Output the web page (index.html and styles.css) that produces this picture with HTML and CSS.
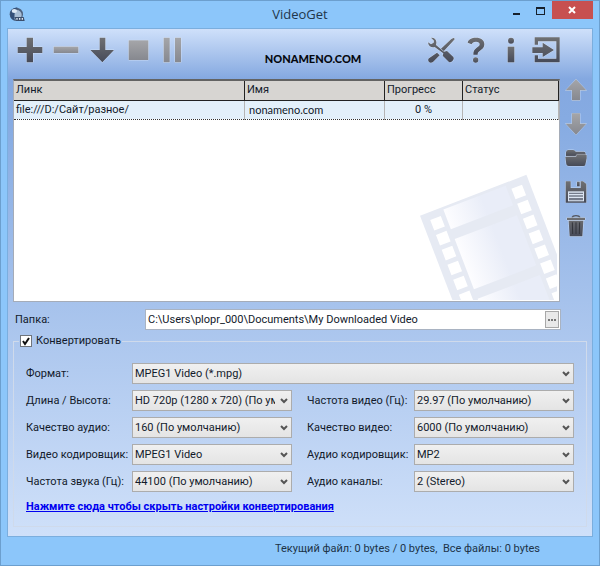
FILE: index.html
```html
<!DOCTYPE html>
<html lang="ru">
<head>
    <meta charset="UTF-8">
    <meta name="viewport" content="width=device-width, initial-scale=1.0">
    <title>VideoGet</title>
    <link rel="stylesheet" href="styles.css">
</head>
<body>
    <svg class="defs" width="0" height="0" aria-hidden="true">
        <defs>
            <linearGradient id="dark" x1="0" y1="0" x2="0" y2="1">
                <stop offset="0" stop-color="#6f7073"/>
                <stop offset="1" stop-color="#464a58"/>
            </linearGradient>
            <linearGradient id="light" x1="0" y1="0" x2="0" y2="1">
                <stop offset="0" stop-color="#a5a6a9"/>
                <stop offset="1" stop-color="#86888f"/>
            </linearGradient>
            <linearGradient id="frame" x1="0" y1="0" x2="1" y2="0">
                <stop offset="0" stop-color="#fdfdff"/>
                <stop offset="0.6" stop-color="#e9edf8"/>
            </linearGradient>
        </defs>
    </svg>

    <header class="titlebar">
        <svg class="logo" width="16" height="16" viewBox="0 0 48 48">
            <circle cx="22" cy="22" r="20" fill="#4c607e"/>
            <circle cx="23" cy="24" r="15" fill="#a9bed6"/>
            <path d="M4 26a20 20 0 0 1 22-24q-12 8-9 38Q6 36 4 26z" fill="#34507a"/>
            <ellipse cx="16" cy="12" rx="8" ry="6" fill="#dfeaf6"/>
            <path d="M16 30h28l3 12H22z" fill="#3c4f6d"/>
            <path d="M22 33h4v5h-4zM30 33h4v5h-4zM38 33h4v5h-4z" fill="#dfe8f2"/>
        </svg>
        <h1>VideoGet</h1>
        <div class="window-buttons">
            <button type="button" aria-label="Свернуть">
                <svg width="9" height="9" viewBox="0 0 9 9"><path d="M1 7h7v2H1z" fill="#16202c"/></svg>
            </button>
            <button type="button" aria-label="Развернуть">
                <svg width="9" height="9" viewBox="0 0 9 9"><path d="M0 1h9v8H0zM1 3v5h7V3z" fill="#16202c" fill-rule="evenodd"/></svg>
            </button>
            <button type="button" class="close" aria-label="Закрыть">
                <svg width="9" height="9" viewBox="0 0 9 9"><path d="M1 1l6 6M7 1L1 7" stroke="#fff" stroke-width="2"/></svg>
            </button>
        </div>
    </header>

    <main class="client">
        <div class="toolbar">
            <button type="button" aria-label="Добавить">
                <svg width="26" height="26" viewBox="0 0 78 78"><path class="dark" d="M29 2h19v28h28v18H48v28H29V48H2V30h27z"/></svg>
            </button>
            <button type="button" aria-label="Удалить">
                <svg width="26" height="26" viewBox="0 0 78 78"><path class="light" d="M2 29h74v19H2z"/></svg>
            </button>
            <button type="button" aria-label="Загрузить">
                <svg width="26" height="26" viewBox="0 0 78 78"><path class="dark" d="M32 2h17v37h26L40 76 4 39h28z"/></svg>
            </button>
            <button type="button" aria-label="Стоп">
                <svg width="26" height="26" viewBox="0 0 78 78"><path class="light" d="M11 10h59v59H11z"/></svg>
            </button>
            <button type="button" aria-label="Пауза">
                <svg width="26" height="26" viewBox="0 0 78 78"><path class="light" d="M8 2h18v74H8zM42 2h18v74H42z"/></svg>
            </button>
            <span class="brand">NONAMENO.COM</span>
            <button type="button" class="wide" aria-label="Настройки">
                <svg width="28" height="26" viewBox="0 0 84 78">
                    <path class="dark" d="M81 2l2 5-33 36-8-8L73 6zM30 47l8 8-20 20q-7 4-12 0-5-6 0-11z"/>
                    <path class="dark" d="M12 2c10-1 17 6 16 16l-1 6 24 20 9-2 19 18c5 7-6 20-14 14L47 56l2-7-26-19c-9 3-19-2-20-14l9 6 8-5 1-6z"/>
                </svg>
            </button>
            <button type="button" class="wide" aria-label="Справка">
                <svg width="18" height="26" viewBox="0 0 54 78">
                    <path class="dark" d="M2 17C4 7 14 2 27 2c15 0 25 7 25 20 0 9-5 14-13 19-6 4-7 6-7 12H19c0-10 2-15 10-21 6-4 9-6 9-10 0-5-4-8-11-8-8 0-11 3-13 8z"/>
                    <circle class="dark" cx="26" cy="69" r="8"/>
                </svg>
            </button>
            <button type="button" class="wide" aria-label="О программе">
                <svg width="8" height="26" viewBox="0 0 24 78"><circle class="dark" cx="12" cy="11" r="9"/><path class="dark" d="M2 29h20v47H2z"/></svg>
            </button>
            <button type="button" class="wide" aria-label="Выход">
                <svg width="28" height="26" viewBox="0 0 84 78"><path class="dark" d="M8 1h75v75H8V55h10v10h55V13H18v10H8zM1 31h31V17l34 22-34 21V48H1z"/></svg>
            </button>
        </div>

        <div class="workspace">
            <div class="list">
                <svg class="film" width="137" height="126" viewBox="60 125 411 378" aria-hidden="true">
                    <g transform="translate(60 250) rotate(-21)">
                        <path d="M0 0h342v600H0z" fill="#e6eaf3"/>
                        <path d="M72 8h200v63H72zM72 103h200v161H72zM72 295h200v161H72z" fill="url(#frame)"/>
                        <path d="M41 40V600M302 40V600" transform="translate(0 -17)" stroke="#fff" stroke-width="34" stroke-dasharray="34 14"/>
                    </g>
                </svg>
                <table>
                    <colgroup>
                        <col><col class="col-name"><col class="col-progress"><col class="col-status">
                    </colgroup>
                    <thead>
                        <tr><th>Линк</th><th>Имя</th><th>Прогресс</th><th>Статус</th></tr>
                    </thead>
                    <tbody>
                        <tr><td>file:///D:/Сайт/разное/</td><td class="name">nonameno.com</td><td class="progress">0 %</td><td></td></tr>
                    </tbody>
                </table>
            </div>
            <div class="side">
                <button type="button" aria-label="Вверх">
                    <svg width="22" height="22" viewBox="0 0 66 66"><path class="light" d="M33 1l31 33H45v30H21V34H2z"/></svg>
                </button>
                <button type="button" aria-label="Вниз">
                    <svg width="22" height="22" viewBox="0 0 66 66"><path class="light" d="M21 1h24v31h19L33 65 2 32h19z"/></svg>
                </button>
                <button type="button" aria-label="Открыть папку">
                    <svg width="22" height="22" viewBox="0 0 66 66">
                        <path class="dark" d="M3 27V16q1-7 7-7h14q6 0 8 5h24q6 0 6 7v6z"/>
                        <path class="dark" d="M1 30l32-1 3-5h29v10l-4 19q-1 4-6 4H11q-6 0-7-5z"/>
                        <path d="M3 28h29l3-6h28" fill="none" stroke="#9a9ca3" stroke-width="2"/>
                    </svg>
                </button>
                <button type="button" aria-label="Сохранить">
                    <svg width="22" height="22" viewBox="0 0 66 66">
                        <path class="dark" d="M2 1h15v20h30V1h7l10 8v56H2z"/>
                        <path class="dark" d="M36 2h8v14h-8z"/>
                        <path d="M9 31h48v30H9z" fill="#dbe4f2"/>
                        <path d="M12 35h42v4H12zM12 43h42v4H12zM12 51h42v7H12z" fill="#747b8b"/>
                    </svg>
                </button>
                <button type="button" aria-label="Очистить">
                    <svg width="22" height="22" viewBox="0 0 66 66">
                        <path d="M21 8q2-6 12-6t12 6" fill="none" stroke="#55585f" stroke-width="4"/>
                        <path class="dark" d="M6 8h54v7H6zM11 17h44l-3 47H14z"/>
                        <path d="M22 22l1 35M33 22v35M44 22l-1 35" stroke="#33353c" stroke-width="3"/>
                    </svg>
                </button>
            </div>
        </div>

        <div class="folder">
            <label for="folder">Папка:</label>
            <div class="path">
                <input type="text" id="folder" value="C:\Users\plopr_000\Documents\My Downloaded Video">
                <button type="button" aria-label="Обзор">
                    <svg width="8" height="2" viewBox="0 0 8 2"><path d="M0 0h2v2H0zM3 0h2v2H3zM6 0h2v2H6z" fill="#777"/></svg>
                </button>
            </div>
        </div>

        <fieldset>
            <legend>
                <input type="checkbox" id="convert" checked>
                <label for="convert">Конвертировать</label>
            </legend>
            <div class="options">
                <label for="format">Формат:</label>
                <select id="format" class="full"><option>MPEG1 Video (*.mpg)</option></select>

                <label for="size">Длина / Высота:</label>
                <select id="size"><option>HD 720p (1280 x 720) (По умолчанию)</option></select>
                <label for="fps" class="second">Частота видео (Гц):</label>
                <select id="fps"><option>29.97 (По умолчанию)</option></select>

                <label for="aquality">Качество аудио:</label>
                <select id="aquality"><option>160 (По умолчанию)</option></select>
                <label for="vquality" class="second">Качество видео:</label>
                <select id="vquality"><option>6000 (По умолчанию)</option></select>

                <label for="vcodec">Видео кодировщик:</label>
                <select id="vcodec"><option>MPEG1 Video</option></select>
                <label for="acodec" class="second">Аудио кодировщик:</label>
                <select id="acodec"><option>MP2</option></select>

                <label for="rate">Частота звука (Гц):</label>
                <select id="rate"><option>44100 (По умолчанию)</option></select>
                <label for="channels" class="second">Аудио каналы:</label>
                <select id="channels"><option>2 (Stereo)</option></select>
            </div>
            <a href="#">Нажмите сюда чтобы скрыть настройки конвертирования</a>
        </fieldset>
    </main>

    <footer>Текущий файл: 0 bytes / 0 bytes,&nbsp; Все файлы: 0 bytes</footer>
</body>
</html>
```
FILE: styles.css
```css
* {
    box-sizing: border-box;
}
body {
    margin: 0;
    min-height: 100vh;
    display: flex;
    flex-direction: column;
    padding: 0 6px;
    border: 1px solid #6c9fce;
    background: #8cc6fa;
    color: #121a2b;
    font-family: Roboto, "Noto Sans", sans-serif;
    font-size: 11px;
    line-height: 16px;
}
button {
    display: flex;
    align-items: center;
    justify-content: center;
    padding: 0;
    border: 0;
    background: none;
    font: inherit;
}
svg {
    display: block;
}
.defs {
    position: absolute;
}
.dark, .light {
    stroke: rgba(225, 236, 252, 0.6);
    stroke-width: 3px;
    paint-order: stroke;
}
.dark {
    fill: url(#dark);
}
.light {
    fill: url(#light);
}

/* title bar */
.titlebar {
    display: grid;
    grid-template-columns: 1fr auto 1fr;
    height: 27px;
}
.logo {
    margin: 6px 0 0 2px;
}
h1 {
    margin: 0;
    font-family: "Open Sans", sans-serif;
    font-size: 13px;
    font-weight: normal;
    line-height: 26px;
    color: #22364a;
}
.window-buttons {
    display: flex;
    justify-content: flex-end;
}
.window-buttons button {
    width: 24px;
    height: 18px;
}
.window-buttons .close {
    width: 41px;
    background: #c75050;
}

.client {
    flex: 1;
    display: flex;
    flex-direction: column;
    padding: 0 5px 9px;
    border: 1px solid #7baede;
    background: linear-gradient(#cfe0fa 0, #84a8e0 50px, #86abe2 90px, #cfe0f9 100%);
}

/* toolbar */
.toolbar {
    display: flex;
    gap: 10px;
    height: 50px;
    padding: 8px 27px 0 4px;
}
.toolbar button {
    width: 26px;
    height: 26px;
}
.toolbar .wide {
    width: 28px;
    margin-left: -3px;
}
.brand {
    flex: 1;
    padding: 14px 0 0 9px;
    text-align: center;
    font-family: Lato, "Open Sans", sans-serif;
    font-size: 11px;
    font-weight: 900;
    color: #05080f;
}

/* downloads */
.workspace {
    flex: 1;
    display: flex;
}
.list {
    position: relative;
    flex: 1;
    min-height: 220px;
    border: 1px solid #a5acb8;
    border-top: 2px solid #636363;
    background: #fff;
}
.film {
    position: absolute;
    right: 2px;
    bottom: 1px;
}
table {
    position: relative;
    width: 100%;
    table-layout: fixed;
    border-collapse: collapse;
}
.col-name {
    width: 140px;
}
.col-progress {
    width: 78px;
}
.col-status {
    width: 96px;
}
th, td {
    height: 19px;
    padding: 0 2px;
    text-align: left;
    font-weight: normal;
    white-space: nowrap;
}
th {
    background: #d7d5d2;
    border-right: 1px solid #222;
    border-bottom: 1px solid #222;
}
td {
    background: #e3f0fa;
    border-right: 1px solid #b5b5b5;
    border-bottom: 1px dotted #333;
}
td.name {
    padding-left: 4px;
    font-family: Lato, "Open Sans", sans-serif;
}
td.progress {
    text-align: center;
}
.side {
    display: flex;
    flex-direction: column;
    gap: 12px;
    width: 27px;
    align-items: flex-end;
}

/* folder */
.folder {
    display: flex;
    align-items: center;
    margin: 7px 26px 3px 2px;
}
.folder label {
    width: 130px;
}
.path {
    flex: 1;
    display: flex;
    height: 21px;
    padding: 1px;
    border: 1px solid #a9b3c2;
    background: #fff;
}
.path input {
    flex: 1;
    min-width: 0;
    padding: 0 1px;
    border: 0;
    font: inherit;
    color: inherit;
}
.path button {
    width: 14px;
    border: 1px solid #a8a8a8;
    background: #e9e9e9;
}

/* conversion options */
fieldset {
    min-width: 0;
    margin: 0;
    padding: 14px 12px 11px;
    border: 1px solid #cfdaeb;
}
legend {
    display: flex;
    align-items: center;
    gap: 4px;
    height: 16px;
    margin-left: -7px;
    padding: 0 1px;
}
legend input {
    appearance: none;
    width: 12px;
    height: 12px;
    margin: 0;
    border: 1px solid #70757c;
    background: #fff;
}
legend input:checked {
    background: #fff url("data:image/svg+xml,%3Csvg xmlns='http://www.w3.org/2000/svg' viewBox='0 0 10 10'%3E%3Cpath d='M2 5l2 3 4-6' fill='none' stroke='%23111' stroke-width='2'/%3E%3C/svg%3E") center / 10px no-repeat;
}
.options {
    display: grid;
    grid-template-columns: 106px 1fr 122px 1fr;
    row-gap: 6px;
    align-items: center;
    white-space: nowrap;
}
.options .full {
    grid-column: 2 / 5;
}
.options .second {
    padding-left: 15px;
}
select {
    appearance: none;
    width: 100%;
    min-width: 0;
    height: 21px;
    padding: 0 16px 0 2px;
    border: 1px solid #acacac;
    border-radius: 0;
    font: inherit;
    color: inherit;
    background: url("data:image/svg+xml,%3Csvg xmlns='http://www.w3.org/2000/svg' viewBox='0 0 8 6'%3E%3Cpath d='M1 1l3 3 3-3' fill='none' stroke='%23555' stroke-width='2'/%3E%3C/svg%3E") right 3px center / 8px 6px no-repeat, linear-gradient(#f0f0f0, #e4e4e4);
}
fieldset a {
    display: inline-block;
    margin-top: 7px;
    font-weight: bold;
    color: #0000f0;
}

footer {
    height: 28px;
    padding: 4px 53px 0 0;
    text-align: right;
    color: #1c3348;
}
```
